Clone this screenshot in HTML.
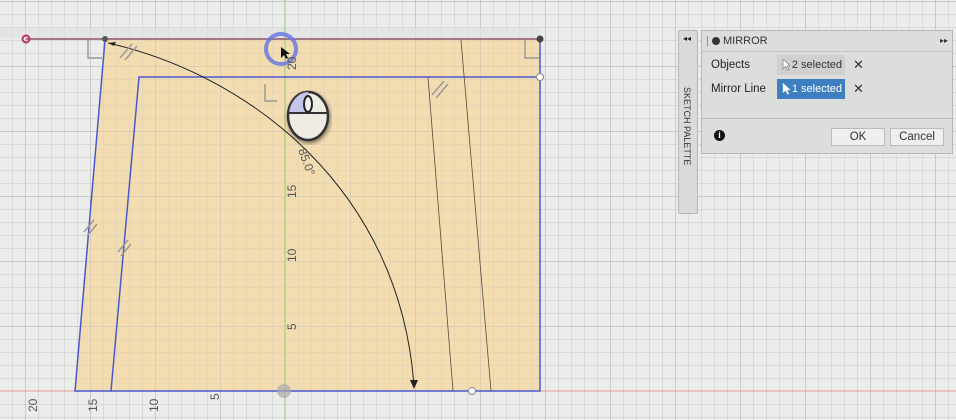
<!DOCTYPE html>
<html><head><meta charset="utf-8"><style>
body{margin:0;width:956px;height:420px;overflow:hidden;background:#ebedeb;font-family:"Liberation Sans",sans-serif;position:relative}
svg{position:absolute;left:0;top:0}
.pal{position:absolute;left:678px;top:30px;width:18px;height:182px;background:#d9dbd9;border:1px solid #b5b7b5;border-radius:2px}
.pal .t{position:absolute;left:3px;top:56px;writing-mode:vertical-rl;font-size:9px;color:#333;letter-spacing:0}
.pal .a{position:absolute;left:4px;top:3px;font-size:8px;color:#222}
.dlg{position:absolute;left:701px;top:30px;width:250px;height:122px;background:#dcdedc;border:1px solid #b5b7b5}
.hd{height:20px;font-size:11px;color:#333;line-height:20px}
.row{position:absolute;font-size:11.5px;color:#222;white-space:nowrap}
.sel{position:absolute;left:75px;width:68px;height:20px;font-size:11px;line-height:20px;text-align:right;padding-right:3px;box-sizing:border-box;white-space:nowrap}
.sel svg{position:absolute;left:5px;top:4px}
.x{position:absolute;left:151px;font-size:13px;color:#333}
.btn{position:absolute;top:97px;height:16px;border:1px solid #bbb;background:#efefef;font-size:11.5px;color:#333;text-align:center;line-height:16px}
</style></head><body>
<svg width="956" height="420" xmlns="http://www.w3.org/2000/svg">
<defs>
<pattern id="g" x="285" y="391" width="13" height="13" patternUnits="userSpaceOnUse"><path d="M0 0H13M0 0V13" stroke="#c6c9c6" stroke-width="1" fill="none"/></pattern>
<pattern id="G" x="285" y="391" width="65" height="65" patternUnits="userSpaceOnUse"><path d="M0 0H65M0 0V65" stroke="#a9aca9" stroke-width="1" fill="none"/></pattern>
<filter id="sh"><feDropShadow dx="1" dy="2" stdDeviation="2" flood-opacity=".5"/></filter>
</defs>
<rect width="956" height="420" fill="url(#g)"/>
<rect width="956" height="420" fill="url(#G)"/>
<rect x="0" y="28" width="540" height="10" fill="#dfe0df" opacity=".7"/>
<polygon points="105,40 540,40 540,391 75,391" fill="#f5d9ab" opacity=".9"/>
<polygon points="105,40 540,40 540,391 75,391" fill="url(#g)" opacity=".6"/>
<polygon points="105,40 540,40 540,391 75,391" fill="url(#G)" opacity=".4"/>
<line x1="0" y1="391" x2="956" y2="391" stroke="#e89a9a" stroke-width="1"/>
<line x1="285" y1="0" x2="285" y2="420" stroke="#98c878" stroke-width="1"/>
<line x1="26" y1="39" x2="540" y2="39" stroke="#8a5068" stroke-width="1.5"/>
<polyline points="105,40 75,391 540,391 540,40" fill="none" stroke="#4a58d0" stroke-width="1.5"/>
<polyline points="111,391 139,77 540,77" fill="none" stroke="#4a58d0" stroke-width="1.5"/>
<line x1="461" y1="40" x2="491" y2="391" stroke="#5a4a3a" stroke-width=".8"/>
<line x1="428" y1="77" x2="453" y2="391" stroke="#5a4a3a" stroke-width=".8"/>
<path d="M108,43 C250,75 400,190 414,386" fill="none" stroke="#222" stroke-width="1"/>
<path d="M410,380 L414,389 L418,380Z" fill="#222"/>
<path d="M108,43 l8,-1 l-2,4z" fill="#222"/>
<circle cx="26" cy="39" r="3.5" fill="none" stroke="#c0306a" stroke-width="2"/>
<circle cx="105" cy="39" r="3" fill="#555"/>
<circle cx="540" cy="39" r="3.5" fill="#444"/>
<circle cx="540" cy="77" r="3.5" fill="#fff" stroke="#888"/>
<circle cx="472" cy="391" r="3.5" fill="#fff" stroke="#888"/>
<circle cx="281" cy="49" r="15" fill="none" stroke="#6a78e0" stroke-width="4" opacity=".85"/>
<path d="M281,47 v11 l3,-3 l2,4 l2,-1 l-2,-4 h4z" fill="#111"/>
<circle cx="284" cy="391" r="7" fill="#aaa" opacity=".7"/>
<g stroke="#999" fill="none" stroke-width="1.5"><path d="M120,58 l12,-14 M125,60 l12,-14"/><path d="M432,95 l12,-14 M436,98 l12,-14"/><path d="M84,232 l10,-12 M87,236 l10,-12"/><path d="M118,252 l10,-12 M121,256 l10,-12"/><path d="M88,40 v18 h14 M265,84 v17 h12 M525,40 v18 h14"/></g>
<g filter="url(#sh)">
<ellipse cx="308" cy="116" rx="20" ry="24" fill="#efece4" stroke="#333" stroke-width="2.5"/>
<path d="M289,113 A20,24 0 0 1 308,92 V113Z" fill="#c3c6ea"/>
<line x1="289" y1="113" x2="327" y2="113" stroke="#333" stroke-width="2"/>
<ellipse cx="308" cy="104" rx="4" ry="8" fill="#eee" stroke="#222" stroke-width="2"/>
</g>
<g font-size="12" fill="#555" font-family="Liberation Sans">
<text transform="translate(298,150) rotate(70)">85.0°</text>
<text transform="translate(296,198) rotate(-90)">15</text>
<text transform="translate(296,262) rotate(-90)">10</text>
<text transform="translate(296,330) rotate(-90)">5</text>
<text transform="translate(296,70) rotate(-90)">20</text>
<text transform="translate(37,412) rotate(-90)">20</text>
<text transform="translate(97,412) rotate(-90)">15</text>
<text transform="translate(158,412) rotate(-90)">10</text>
<text transform="translate(219,400) rotate(-90)">5</text>
</g>
</svg>
<div class="pal"><div class="a">◂◂</div><div class="t">SKETCH PALETTE</div></div>
<div class="dlg">
<div class="hd"><span style="margin-left:4px;color:#888">|</span> <span style="display:inline-block;width:8px;height:8px;border-radius:50%;background:#333;vertical-align:-1px"></span> MIRROR<span style="position:absolute;right:4px;font-size:8px">▸▸</span></div>
<div style="position:absolute;left:0;right:0;top:20px;height:1px;background:#c2c4c2"></div>
<div class="row" style="left:9px;top:28px">Objects</div>
<div class="sel" style="top:24px;background:#cfd0cf;color:#333"><svg width="8" height="12"><path d="M1,0 v10 l2.5,-2.5 l2,4 l1.5,-1 l-2,-3.5 h3.5z" fill="#fff" stroke="#888" stroke-width=".8"/></svg>2 selected</div><div class="x" style="top:26px">✕</div>
<div class="row" style="left:9px;top:52px">Mirror Line</div>
<div class="sel" style="top:48px;background:#3d7fc0;color:#fff"><svg width="8" height="12"><path d="M1,0 v10 l2.5,-2.5 l2,4 l1.5,-1 l-2,-3.5 h3.5z" fill="#fff" stroke="#ccc" stroke-width=".5"/></svg>1 selected</div><div class="x" style="top:50px">✕</div>
<div style="position:absolute;left:0;right:0;top:87px;height:1px;background:#bbb"></div>
<div style="position:absolute;left:12px;top:99px;width:11px;height:11px;border-radius:50%;background:#111;color:#fff;font-size:9px;font-weight:bold;text-align:center;line-height:11px">i</div>
<div class="btn" style="left:129px;width:52px">OK</div>
<div class="btn" style="left:188px;width:52px">Cancel</div>
</div>
</body></html>
